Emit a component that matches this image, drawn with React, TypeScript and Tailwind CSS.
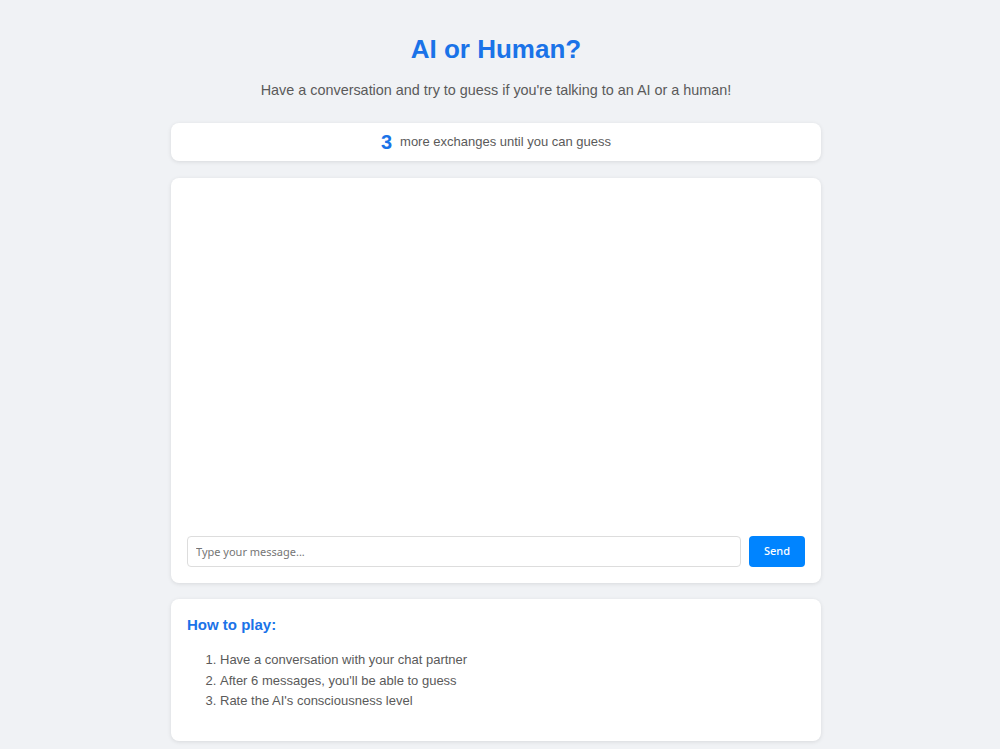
import { useState } from "react";

const steps = [
  "Have a conversation with your chat partner",
  "After 6 messages, you'll be able to guess",
  "Rate the AI's consciousness level",
];

export default function App() {
  const [message, setMessage] = useState("");
  const remaining = 3;

  return (
    <div className="min-h-screen bg-[#f0f2f5] pr-2 font-['Liberation_Sans',Arial,sans-serif]">
      <div className="mx-auto max-w-[650px] pt-[34px]">
        {/* Header */}
        <h1 className="text-center text-[26px] leading-[30px] font-bold text-[#1a73e8]">AI or Human?</h1>
        <p className="mt-[17px] text-center text-[14.4px] leading-[18px] text-[#5a5a5a]">
          Have a conversation and try to guess if you're talking to an AI or a human!
        </p>

        {/* Exchange counter */}
        <div className="mt-[24px] flex h-[38px] items-center justify-center gap-2 rounded-lg bg-white shadow-[0_1px_4px_rgba(0,0,0,0.1)]">
          <span className="text-[20px] font-bold text-[#1a73e8]">{remaining}</span>
          <span className="text-[13px] text-[#5a5a5a]">more exchanges until you can guess</span>
        </div>

        {/* Chat window */}
        <div className="mt-[17px] flex h-[405px] flex-col rounded-lg bg-white p-4 shadow-[0_1px_4px_rgba(0,0,0,0.1)]">
          <div className="flex-1 overflow-y-auto"></div>
          <div className="flex gap-2">
            <input
              value={message}
              onChange={(e) => setMessage(e.target.value)}
              placeholder="Type your message..."
              className="h-[31px] flex-1 rounded border border-[#ddd] px-2 font-['Noto_Sans',sans-serif] text-[11px] text-[#333] outline-none placeholder:text-[#757575]"
            />
            <button className="h-[31px] w-[56px] rounded bg-[#0084ff] font-['Noto_Sans',sans-serif] text-[11px] font-medium text-white">
              Send
            </button>
          </div>
        </div>

        {/* Instructions */}
        <div className="mt-4 rounded-lg bg-white px-4 pt-[16px] pb-[29px] shadow-[0_1px_4px_rgba(0,0,0,0.1)]">
          <h3 className="text-[15px] leading-[20px] font-bold text-[#1a73e8]">How to play:</h3>
          <ol className="mt-[15px] list-decimal pl-[33px] text-[13px] leading-[20.5px] text-[#5a5a5a]">
            {steps.map((step) => (
              <li key={step}>{step}</li>
            ))}
          </ol>
        </div>
      </div>
    </div>
  );
}
